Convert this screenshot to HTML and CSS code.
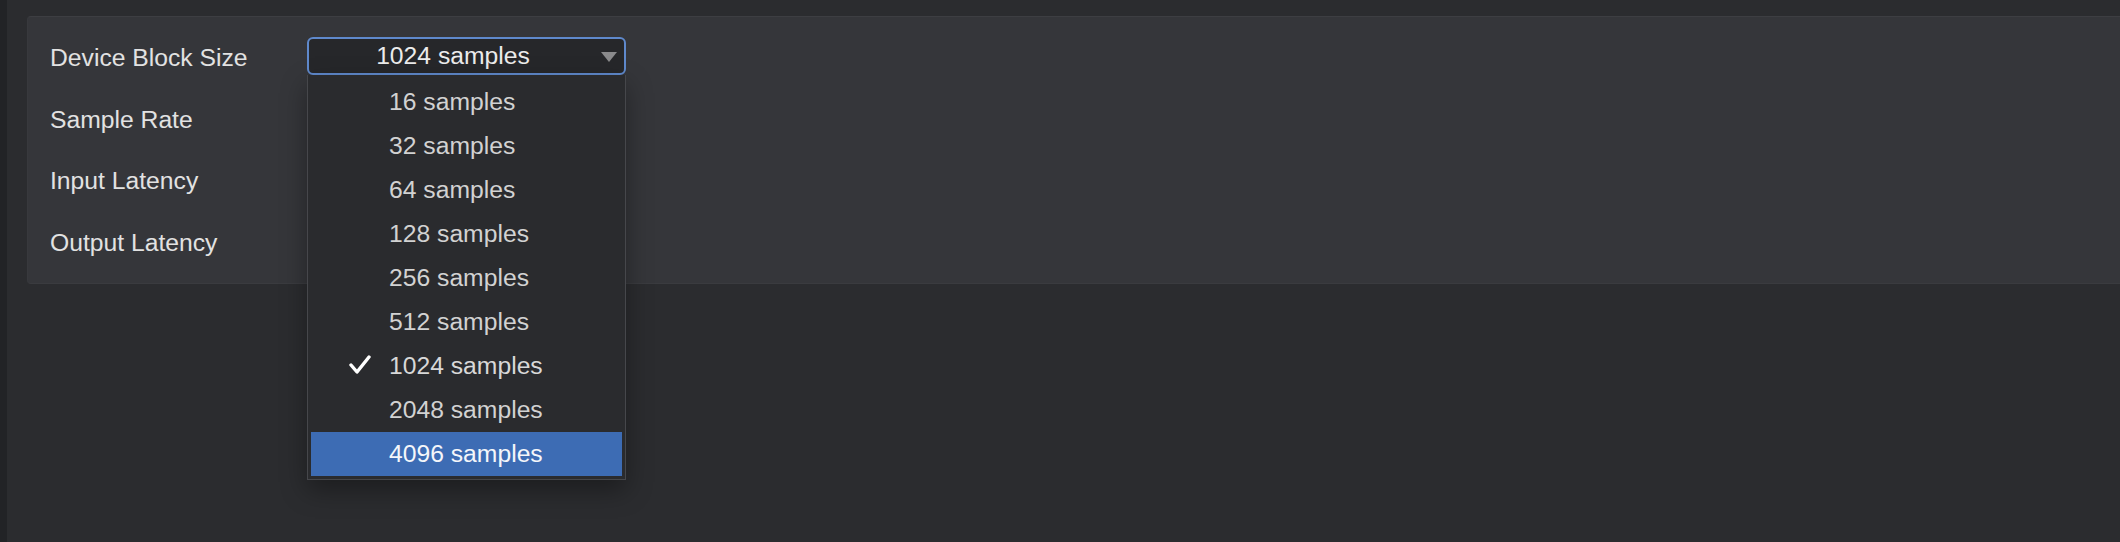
FILE: index.html
```html
<!DOCTYPE html>
<html lang="en">
<head>
  <meta charset="UTF-8">
  <title>Audio Device Settings</title>
  <link rel="stylesheet" href="styles.css">
</head>
<body>
  <div class="edge"></div>

  <div class="content">
    <div class="panel">
      <div class="labels">
        <div class="row">Device Block Size</div>
        <div class="row">Sample Rate</div>
        <div class="row">Input Latency</div>
        <div class="row">Output Latency</div>
      </div>

      <div class="controls">
        <div class="row">
          <div class="select">
            <div class="select-btn">
              <span class="select-value">1024 samples</span>
              <span class="arrow"></span>
            </div>
            <ul class="menu">
              <li>16 samples</li>
              <li>32 samples</li>
              <li>64 samples</li>
              <li>128 samples</li>
              <li>256 samples</li>
              <li>512 samples</li>
              <li class="checked">
                <svg class="check" width="22" height="20" viewBox="0 0 22 20"><polyline points="2,10 8,17 20,2" fill="none" stroke="#fff" stroke-width="3.4" stroke-linecap="round" stroke-linejoin="round"/></svg>
                1024 samples
              </li>
              <li>2048 samples</li>
              <li class="active">4096 samples</li>
            </ul>
          </div>
        </div>
      </div>
    </div>
  </div>
</body>
</html>
```

FILE: styles.css
```css
    body {
      margin: 0;
      height: 542px;
      display: flex;
      background: #2b2c2f;
      font-family: "Liberation Sans", Arial, sans-serif;
      font-size: 24.7px;
      color: #e2e2e2;
      overflow: hidden;
    }

    .edge {
      width: 7px;
      background: #222326;
    }

    .content {
      flex: 1;
      padding: 16px 0 0 20px;
    }

    .panel {
      display: flex;
      background: #35363a;
      border-top: 1px solid #3d3e42;
      border-bottom: 1px solid #3a3b3f;
      border-left: 1px solid #38393d;
      border-radius: 4px 0 0 4px;
      padding: 20px 22px 21px 22px;
      height: 225px;
    }

    .labels {
      width: 257px;
      display: flex;
      flex-direction: column;
      gap: 24px;
      padding-top: 2px;
    }

    .row {
      height: 38px;
      display: flex;
      align-items: center;
    }

    .controls {
      display: flex;
      flex-direction: column;
      gap: 24px;
    }

    .select {
      position: relative;
      width: 319px;
    }

    .select-btn {
      box-sizing: border-box;
      height: 38px;
      display: flex;
      align-items: center;
      background: #26272a;
      border: 2px solid #5f89cc;
      border-radius: 6px;
      padding-right: 27px;
      color: #ececec;
    }

    .select-value {
      flex: 1;
      text-align: center;
    }

    .arrow {
      position: absolute;
      right: 9px;
      top: 15px;
      width: 0;
      height: 0;
      border-left: 8px solid transparent;
      border-right: 8px solid transparent;
      border-top: 10px solid #8a8a8c;
    }

    .menu {
      position: absolute;
      left: 0;
      top: 38px;
      width: 319px;
      box-sizing: border-box;
      margin: 0;
      padding: 5px 3px 3px 3px;
      list-style: none;
      background: #2a2b2e;
      border: 1px solid #46474b;
      border-top: none;
      box-shadow: 0 10px 24px rgba(0, 0, 0, 0.35);
      z-index: 2;
    }

    .menu li {
      position: relative;
      height: 44px;
      display: flex;
      align-items: center;
      padding-left: 78px;
      color: #d2d2d2;
    }

    .menu li.checked {
      color: #d8d8d8;
    }

    .check {
      position: absolute;
      left: 38px;
      top: 11px;
    }

    .menu li.active {
      background: #3d6cb4;
      color: #f4f6fa;
    }
```
